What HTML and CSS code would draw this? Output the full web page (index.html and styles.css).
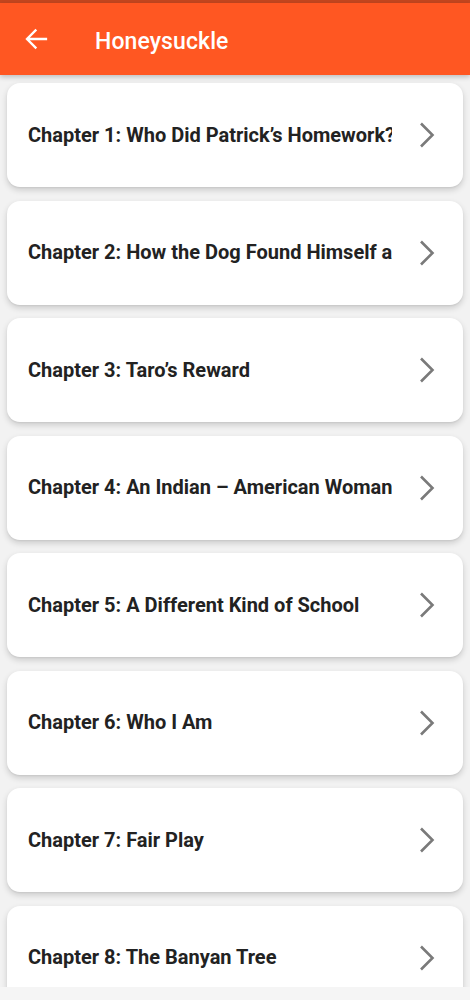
FILE: index.html
```html
<!DOCTYPE html>
<html>
<head>
<meta charset="utf-8">
<link rel="stylesheet" href="styles.css">
</head>
<body>
<div class="statusbar"></div>
<header class="appbar">
  <svg class="back" viewBox="0 0 24 24" width="24" height="24"><path d="M22 12H3.5M11.5 3.5L3 12l8.5 8.5" fill="none" stroke="#fff" stroke-width="2.3" stroke-linecap="square"/></svg>
  <h1 class="title">Honeysuckle</h1>
</header>
<main class="list">
  <div class="card"><span class="label">Chapter 1: Who Did Patrick’s Homework?</span><svg class="chev" viewBox="0 0 16 26"><path d="M2 1.5L13.5 13 2 24.5" fill="none" stroke="#7a7a7a" stroke-width="2.6"/></svg></div>
  <div class="card"><span class="label">Chapter 2: How the Dog Found Himself a New Master!</span><svg class="chev" viewBox="0 0 16 26"><path d="M2 1.5L13.5 13 2 24.5" fill="none" stroke="#7a7a7a" stroke-width="2.6"/></svg></div>
  <div class="card"><span class="label">Chapter 3: Taro’s Reward</span><svg class="chev" viewBox="0 0 16 26"><path d="M2 1.5L13.5 13 2 24.5" fill="none" stroke="#7a7a7a" stroke-width="2.6"/></svg></div>
  <div class="card"><span class="label">Chapter 4: An Indian – American Woman in Space: Kalpana Chawla</span><svg class="chev" viewBox="0 0 16 26"><path d="M2 1.5L13.5 13 2 24.5" fill="none" stroke="#7a7a7a" stroke-width="2.6"/></svg></div>
  <div class="card"><span class="label">Chapter 5: A Different Kind of School</span><svg class="chev" viewBox="0 0 16 26"><path d="M2 1.5L13.5 13 2 24.5" fill="none" stroke="#7a7a7a" stroke-width="2.6"/></svg></div>
  <div class="card"><span class="label">Chapter 6: Who I Am</span><svg class="chev" viewBox="0 0 16 26"><path d="M2 1.5L13.5 13 2 24.5" fill="none" stroke="#7a7a7a" stroke-width="2.6"/></svg></div>
  <div class="card"><span class="label">Chapter 7: Fair Play</span><svg class="chev" viewBox="0 0 16 26"><path d="M2 1.5L13.5 13 2 24.5" fill="none" stroke="#7a7a7a" stroke-width="2.6"/></svg></div>
  <div class="card"><span class="label">Chapter 8: The Banyan Tree</span><svg class="chev" viewBox="0 0 16 26"><path d="M2 1.5L13.5 13 2 24.5" fill="none" stroke="#7a7a7a" stroke-width="2.6"/></svg></div>
</main>
<div class="navbar"></div>
</body>
</html>
```
FILE: styles.css
```css
* { box-sizing: border-box; }
html, body { margin: 0; padding: 0; }
body {
  width: 470px;
  height: 1000px;
  overflow: hidden;
  background: #f2f2f2;
  font-family: Roboto, "Noto Sans", sans-serif;
  display: flex;
  flex-direction: column;
}
.statusbar {
  height: 3px;
  background: #c4461f;
  flex: none;
}
.appbar {
  height: 72px;
  background: #ff5722;
  display: flex;
  align-items: center;
  padding-left: 24px;
  padding-top: 4px;
  flex: none;
  position: relative;
  z-index: 2;
  box-shadow: 0 2px 5px rgba(0,0,0,0.22);
}
.back { display: block; flex: none; margin-top: -4px; }
.title {
  margin: 0 0 0 47px;
  color: #fff;
  font-size: 23px;
  font-weight: 500;
  letter-spacing: 0.1px;
}
.list {
  height: 912px;
  flex: none;
  overflow: hidden;
  padding: 8px 7px 0 7px;
  display: flex;
  flex-direction: column;
  gap: 13.5px;
}
.card {
  flex: none;
  height: 104px;
  background: #fff;
  border-radius: 13px;
  box-shadow: 0 3px 6px rgba(0,0,0,0.16), 0 1px 2px rgba(0,0,0,0.06);
  display: flex;
  align-items: center;
  padding-left: 21px;
}
.label {
  width: 364px;
  white-space: nowrap;
  overflow: hidden;
  font-size: 20px;
  font-weight: 700;
  color: #222;
  letter-spacing: 0;
  margin-top: -1px;
}
.chev {
  width: 16px;
  height: 26px;
  margin-left: 27px;
  flex: none;
}
.navbar {
  flex: 1;
  background: #f5f5f5;
  position: relative;
  z-index: 2;
}
```
